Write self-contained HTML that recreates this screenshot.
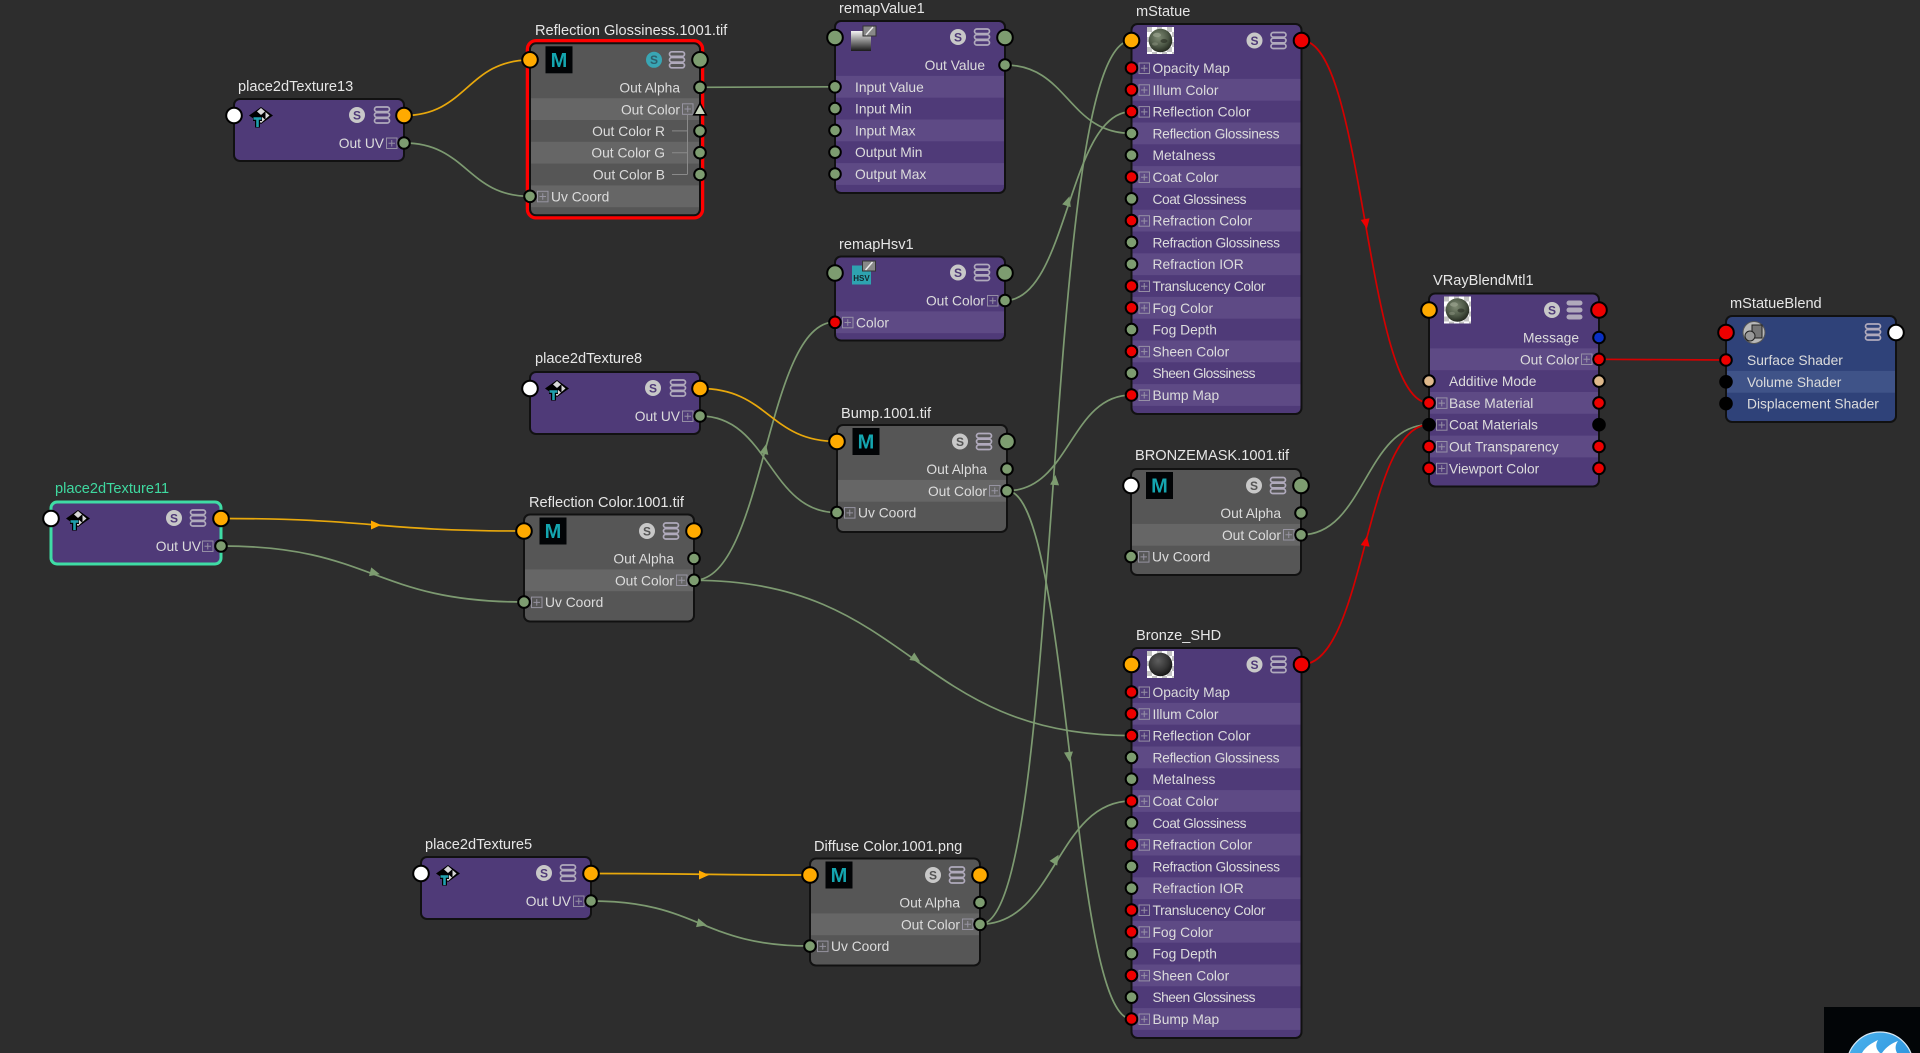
<!DOCTYPE html>
<html><head><meta charset="utf-8"><title>Node graph</title>
<style>
html,body{margin:0;padding:0;background:#2d2d2d;width:1920px;height:1053px;overflow:hidden}
svg{display:block;position:absolute;left:0;top:0}
text{font-family:"Liberation Sans",sans-serif;font-size:13.8px;fill:#dcdcdc}
.e{text-anchor:end}
.ti{font-size:14.6px;fill:#e6e6e6}
.s{font-size:12px;font-weight:bold;fill:#4f3a78;text-anchor:middle}
.m{font-size:20px;font-weight:bold;fill:#14a6b0;text-anchor:middle}
.wg,.wo,.wr{fill:none;stroke-width:1.7}
.wg{stroke:#7d9a71}.wo{stroke:#e8a80c}.wr{stroke:#d40000}
circle.r,circle.g,circle.o,circle.w,circle.t,circle.k,circle.b{stroke:#000;stroke-width:2}
.r{fill:#ee0000}.g{fill:#7d9c70}.o{fill:#ffaa00}.w{fill:#fff}.t{fill:#dfb98c}.k{fill:#000}.b{fill:#0a30c4}
.pu{fill:#4f3a78;stroke:#111;stroke-width:2}.gr{fill:#565656;stroke:#111;stroke-width:2}.bl{fill:#2f4279;stroke:#111;stroke-width:2}
.lp{fill:#5e4a85}.lg{fill:#666}.lb{fill:#3f5388}
</style></head><body>
<svg width="1920" height="1053" viewBox="0 0 1920 1053" xmlns="http://www.w3.org/2000/svg">
<defs>
<g id="pb"><rect x=".5" y=".5" width="10.5" height="10.5" fill="none" stroke="#a09cab" stroke-opacity=".85"/><path d="M5.75 2.5v6.5M2.5 5.75h6.5" stroke="#a09cab" stroke-opacity=".85" fill="none"/></g>
<g id="mn" fill="none" stroke="#b0aabc" stroke-width="1.7"><rect x="-7.5" y="-8" width="15" height="4.6" rx="2.3"/><rect x="-7.5" y="-2.3" width="15" height="4.6" rx="2.3"/><rect x="-7.5" y="3.4" width="15" height="4.6" rx="2.3"/></g>
<g id="tx"><polygon points="11,-8.5 23,0 11,8.5 -1,0" fill="#000"/><polygon points="11,-7.5 15,-4 11,-.5 7,-4" fill="#d8d8d8"/><polygon points="11,.5 15,4 11,7.5 7,4" fill="#d8d8d8"/><polygon points="15.5,-3.5 19.5,0 15.5,3.5" fill="#d8d8d8"/><path d="M3 3h9M7.5 3v9" stroke="#000" stroke-width="5" fill="none"/><path d="M3.5 3h8M7.5 3v8.5" stroke="#1fa0ad" stroke-width="2.6" fill="none"/></g>
<pattern id="ck" width="10" height="10" patternUnits="userSpaceOnUse"><rect width="10" height="10" fill="#fff"/><rect width="5" height="5" fill="#c4c4c4"/><rect x="5" y="5" width="5" height="5" fill="#c4c4c4"/></pattern>
<radialGradient id="sp1" cx=".42" cy=".36" r=".7"><stop offset="0" stop-color="#7f8a74"/><stop offset=".55" stop-color="#4f5a48"/><stop offset="1" stop-color="#1c2018"/></radialGradient>
<radialGradient id="sp2" cx=".4" cy=".34" r=".72"><stop offset="0" stop-color="#5e5e5e"/><stop offset=".6" stop-color="#343434"/><stop offset="1" stop-color="#101010"/></radialGradient>
<linearGradient id="vg" x1="0" y1="0" x2="0" y2="1"><stop offset="0" stop-color="#f4f4f4"/><stop offset="1" stop-color="#1a1a1a"/></linearGradient>
<linearGradient id="lg" x1="0" y1="0" x2="1" y2="1"><stop offset="0" stop-color="#4db4ee"/><stop offset="1" stop-color="#1f86d6"/></linearGradient>
<g id="sw1"><rect width="27" height="27" fill="url(#ck)"/><circle cx="13.5" cy="13.5" r="11.8" fill="url(#sp1)"/><ellipse cx="10" cy="8" rx="4" ry="2.2" fill="#9aa28e" opacity=".7"/><ellipse cx="17" cy="14" rx="3.5" ry="2" fill="#2d3328" opacity=".7"/><ellipse cx="8" cy="17" rx="3" ry="1.6" fill="#8d9682" opacity=".5"/></g>
<g id="sw2"><rect width="27" height="27" fill="url(#ck)"/><circle cx="13.5" cy="13.5" r="11.8" fill="url(#sp2)"/></g>
<g id="mi"><rect width="27" height="27" fill="#020406"/></g>
</defs>

<rect width="1920" height="1053" fill="#2d2d2d"/>

<!-- wires -->
<path class="wo" d="M404,115.5C467,115.5 467,60 530,60"/>
<path class="wg" d="M404,143C467,143 467,196.3 530,196.3"/>
<path class="wg" d="M700,87.3L835,86.8"/>
<path class="wg" d="M1005,65C1068,65 1068,133.4 1131.5,133.4"/>
<path class="wg" d="M1005,300.5C1068,300.5 1068,111.6 1131.5,111.6"/>
<path class="wg" d="M980,924.3C1065,924.3 1040,40.5 1131.5,40.5"/>
<path class="wg" d="M980,924.3C1056,924.3 1056,801 1131.5,801"/>
<path class="wg" d="M694,580.3C765,580 765,322 835,322"/>
<path class="wg" d="M694,580.3C912,580.3 912,735.6 1131.5,735.6"/>
<path class="wo" d="M700,388.5C769,388.5 769,441.5 837,441.5"/>
<path class="wg" d="M700,416C769,416 769,512.6 837,512.6"/>
<path class="wg" d="M1007,490.8C1070,490.8 1070,395 1131.5,395"/>
<path class="wg" d="M1007,490.8C1070,490.8 1070,1019 1131.5,1019"/>
<path class="wg" d="M1301,534.8C1365,534.8 1365,424.7 1429,424.7"/>
<path class="wr" d="M1301.5,664.5C1365,664.5 1365,424.7 1429,424.7"/>
<path class="wr" d="M1301.5,40.5C1365,40.5 1365,402.9 1429,402.9"/>
<path class="wr" d="M1599,359.3L1726,360"/>
<path class="wo" d="M222,518.5C373,518.5 373,531 524,531"/>
<path class="wg" d="M222,546C373,546 373,602 524,602"/>
<path class="wo" d="M591,873.5C700,873.5 700,875 810,875"/>
<path class="wg" d="M591,901C700,901 700,946 810,946"/>

<!-- arrows -->
<g>
<polygon class="o" transform="translate(376,525)" points="-5,-4.5 5,0 -5,4.5"/>
<polygon class="g" transform="translate(375,573) rotate(14)" points="-5,-4.5 5,0 -5,4.5"/>
<polygon class="o" transform="translate(704,875)" points="-5,-4.5 5,0 -5,4.5"/>
<polygon class="g" transform="translate(702,924) rotate(14)" points="-5,-4.5 5,0 -5,4.5"/>
<polygon class="g" transform="translate(916,659) rotate(33)" points="-5,-4.5 5,0 -5,4.5"/>
<polygon class="g" transform="translate(765,449) rotate(-78)" points="-5,-4.5 5,0 -5,4.5"/>
<polygon class="g" transform="translate(1068,201) rotate(-72)" points="-5,-4.5 5,0 -5,4.5"/>
<polygon class="g" transform="translate(1069,757) rotate(84)" points="-5,-4.5 5,0 -5,4.5"/>
<polygon class="g" transform="translate(1056,859) rotate(-58)" points="-5,-4.5 5,0 -5,4.5"/>
<polygon class="g" transform="translate(1055,480) rotate(-85)" points="-5,-4.5 5,0 -5,4.5"/>
<polygon class="r" transform="translate(1366,224) rotate(80)" points="-5,-4.5 5,0 -5,4.5"/>
<polygon class="r" transform="translate(1366,541) rotate(-80)" points="-5,-4.5 5,0 -5,4.5"/>
</g>

<!-- place2dTexture13 -->
<text class="ti" x="238" y="91">place2dTexture13</text>
<g transform="translate(234,99)">
<rect class="pu" width="170" height="62" rx="6"/>
<use href="#tx" x="16" y="16.5"/>
<circle cx="123" cy="16" r="8" fill="#c8c8c8"/><text class="s" x="123" y="20.3">S</text>
<use href="#mn" x="148" y="16"/>
<text class="e" x="150" y="49">Out UV</text><use href="#pb" x="152" y="38.5"/>
<circle class="w" cx="0" cy="16.5" r="7.8"/><circle class="o" cx="170" cy="16.5" r="7.8"/><circle class="g" cx="170" cy="44" r="5.8"/>
</g>

<!-- Reflection Glossiness -->
<text class="ti" x="535" y="35">Reflection Glossiness.1001.tif</text>
<g transform="translate(530,43.3)">
<rect x="-2" y="-2" width="174" height="176" rx="8" fill="none" stroke="#f00" stroke-width="4.5"/>
<rect class="gr" width="170" height="172" rx="6"/>
<rect class="lg" x="1" y="54.9" width="168" height="21.8"/><rect class="lg" x="1" y="98.5" width="168" height="21.8"/><rect class="lg" x="1" y="142.1" width="168" height="21.8"/>
<use href="#mi" x="15.5" y="3"/><text class="m" x="29" y="23.5">M</text>
<circle cx="124" cy="16.5" r="8" fill="#39a6b4"/><text class="s" x="124" y="20.8" style="fill:#2d5f6c">S</text>
<use href="#mn" x="147" y="16.5"/>
<text class="e" x="150" y="49">Out Alpha</text>
<text class="e" x="150" y="71">Out Color</text><use href="#pb" x="152" y="60"/>
<text class="e" x="135" y="92.6">Out Color R</text>
<text class="e" x="135" y="114.4">Out Color G</text>
<text class="e" x="135" y="136.2">Out Color B</text>
<path d="M157.5,71V131M142,87.6H157.5M142,109.4H157.5M142,131.2H157.5" stroke="#8a8a8a" fill="none"/>
<use href="#pb" x="7" y="147.5"/><text x="21" y="158">Uv Coord</text>
<circle class="o" cx="0" cy="16.5" r="7.8"/><circle class="g" cx="170" cy="16.5" r="7.8"/>
<circle class="g" cx="170" cy="44" r="5.8"/><polygon points="170,60 176.2,71.5 163.8,71.5" fill="#c7d4bc" stroke="#000" stroke-width="1.6"/>
<circle class="g" cx="170" cy="87.6" r="5.8"/><circle class="g" cx="170" cy="109.4" r="5.8"/><circle class="g" cx="170" cy="131.2" r="5.8"/>
<circle class="g" cx="0" cy="153" r="5.8"/>
</g>

<!-- remapValue1 -->
<text class="ti" x="839" y="13">remapValue1</text>
<g transform="translate(835,21)">
<rect class="pu" width="170" height="172" rx="6"/>
<rect class="lp" x="1" y="54.9" width="168" height="21.8"/><rect class="lp" x="1" y="98.5" width="168" height="21.8"/><rect class="lp" x="1" y="142.1" width="168" height="21.8"/>
<rect x="16" y="10" width="20" height="20" fill="url(#vg)"/><rect x="28" y="5" width="13" height="10" fill="#888" stroke="#333"/><path d="M31,14L38,6" stroke="#eee" stroke-width="1.4"/>
<circle cx="123" cy="16" r="8" fill="#c8c8c8"/><text class="s" x="123" y="20.3">S</text>
<use href="#mn" x="147" y="16"/>
<text class="e" x="150" y="49">Out Value</text>
<text x="20" y="71">Input Value</text>
<text x="20" y="92.6">Input Min</text>
<text x="20" y="114.4">Input Max</text>
<text x="20" y="136.2">Output Min</text>
<text x="20" y="158">Output Max</text>
<circle class="g" cx="0" cy="16.5" r="7.8"/><circle class="g" cx="170" cy="16.5" r="7.8"/>
<circle class="g" cx="170" cy="44" r="5.8"/>
<circle class="g" cx="0" cy="65.8" r="5.8"/><circle class="g" cx="0" cy="87.6" r="5.8"/><circle class="g" cx="0" cy="109.4" r="5.8"/><circle class="g" cx="0" cy="131.2" r="5.8"/><circle class="g" cx="0" cy="153" r="5.8"/>
</g>

<!-- mStatue -->
<text class="ti" x="1136" y="16">mStatue</text>
<g transform="translate(1131.5,24)">
<rect class="pu" width="170" height="390" rx="6"/>
<rect class="lp" x="1" y="54.9" width="168" height="21.8"/><rect class="lp" x="1" y="98.5" width="168" height="21.8"/><rect class="lp" x="1" y="142.1" width="168" height="21.8"/><rect class="lp" x="1" y="185.7" width="168" height="21.8"/><rect class="lp" x="1" y="229.3" width="168" height="21.8"/><rect class="lp" x="1" y="272.9" width="168" height="21.8"/><rect class="lp" x="1" y="316.5" width="168" height="21.8"/><rect class="lp" x="1" y="360.1" width="168" height="21.8"/>
<use href="#sw1" x="15.5" y="3"/>
<circle cx="123" cy="16.5" r="8" fill="#c8c8c8"/><text class="s" x="123" y="20.8">S</text>
<use href="#mn" x="147" y="16.5"/>
<use href="#pb" x="7" y="38.5"/><text x="21" y="49">Opacity Map</text>
<use href="#pb" x="7" y="60.3"/><text x="21" y="71">Illum Color</text>
<use href="#pb" x="7" y="82.1"/><text x="21" y="92.6">Reflection Color</text>
<text x="21" y="114.4" textLength="127">Reflection Glossiness</text>
<text x="21" y="136.2">Metalness</text>
<use href="#pb" x="7" y="147.5"/><text x="21" y="158">Coat Color</text>
<text x="21" y="179.8" textLength="94">Coat Glossiness</text>
<use href="#pb" x="7" y="191.2"/><text x="21" y="201.6">Refraction Color</text>
<text x="21" y="223.4" textLength="127.5">Refraction Glossiness</text>
<text x="21" y="245.2">Refraction IOR</text>
<use href="#pb" x="7" y="256.5"/><text x="21" y="267" textLength="113">Translucency Color</text>
<use href="#pb" x="7" y="278.3"/><text x="21" y="288.8">Fog Color</text>
<text x="21" y="310.6">Fog Depth</text>
<use href="#pb" x="7" y="321.9"/><text x="21" y="332.4">Sheen Color</text>
<text x="21" y="354.2" textLength="103">Sheen Glossiness</text>
<use href="#pb" x="7" y="365.5"/><text x="21" y="376">Bump Map</text>
<circle class="o" cx="0" cy="16.5" r="7.8"/><circle class="r" cx="170" cy="16.5" r="7.8"/>
<circle class="r" cx="0" cy="44" r="5.8"/><circle class="r" cx="0" cy="65.8" r="5.8"/><circle class="r" cx="0" cy="87.6" r="5.8"/><circle class="g" cx="0" cy="109.4" r="5.8"/><circle class="g" cx="0" cy="131.2" r="5.8"/><circle class="r" cx="0" cy="153" r="5.8"/><circle class="g" cx="0" cy="174.8" r="5.8"/><circle class="r" cx="0" cy="196.6" r="5.8"/><circle class="g" cx="0" cy="218.4" r="5.8"/><circle class="g" cx="0" cy="240.2" r="5.8"/><circle class="r" cx="0" cy="262" r="5.8"/><circle class="r" cx="0" cy="283.8" r="5.8"/><circle class="g" cx="0" cy="305.6" r="5.8"/><circle class="r" cx="0" cy="327.4" r="5.8"/><circle class="g" cx="0" cy="349.2" r="5.8"/><circle class="r" cx="0" cy="371" r="5.8"/>
</g>

<!-- remapHsv1 -->
<text class="ti" x="839" y="249">remapHsv1</text>
<g transform="translate(835,256.5)">
<rect class="pu" width="170" height="84" rx="6"/>
<rect class="lp" x="1" y="54.9" width="168" height="21.8"/>
<rect x="17" y="9" width="19" height="19" fill="#2ea3b0"/><text x="26.5" y="24.5" style="font-size:8px;font-weight:bold;fill:#13262c;text-anchor:middle">HSV</text>
<rect x="27.5" y="4.5" width="13" height="10" fill="#888" stroke="#333"/><path d="M30.5,13.5L37.5,5.5" stroke="#eee" stroke-width="1.4"/>
<circle cx="123" cy="16" r="8" fill="#c8c8c8"/><text class="s" x="123" y="20.3">S</text>
<use href="#mn" x="147" y="16"/>
<text class="e" x="150" y="49">Out Color</text><use href="#pb" x="152" y="38.5"/>
<use href="#pb" x="7" y="60.3"/><text x="21" y="71">Color</text>
<circle class="g" cx="0" cy="16.5" r="7.8"/><circle class="g" cx="170" cy="16.5" r="7.8"/><circle class="g" cx="170" cy="44" r="5.8"/><circle class="r" cx="0" cy="65.8" r="5.8"/>
</g>

<!-- place2dTexture8 -->
<text class="ti" x="535" y="363">place2dTexture8</text>
<g transform="translate(530,372)">
<rect class="pu" width="170" height="62" rx="6"/>
<use href="#tx" x="16" y="16.5"/>
<circle cx="123" cy="16" r="8" fill="#c8c8c8"/><text class="s" x="123" y="20.3">S</text>
<use href="#mn" x="148" y="16"/>
<text class="e" x="150" y="49">Out UV</text><use href="#pb" x="152" y="38.5"/>
<circle class="w" cx="0" cy="16.5" r="7.8"/><circle class="o" cx="170" cy="16.5" r="7.8"/><circle class="g" cx="170" cy="44" r="5.8"/>
</g>

<!-- Bump -->
<text class="ti" x="841" y="418">Bump.1001.tif</text>
<g transform="translate(837,425)">
<rect class="gr" width="170" height="107" rx="6"/>
<rect class="lg" x="1" y="54.9" width="168" height="21.8"/>
<use href="#mi" x="15.5" y="3"/><text class="m" x="29" y="23.5">M</text>
<circle cx="123" cy="16.5" r="8" fill="#c8c8c8"/><text class="s" x="123" y="20.8" style="fill:#555">S</text>
<use href="#mn" x="147" y="16.5"/>
<text class="e" x="150" y="49">Out Alpha</text>
<text class="e" x="150" y="71">Out Color</text><use href="#pb" x="152" y="60"/>
<use href="#pb" x="7" y="82.1"/><text x="21" y="92.6">Uv Coord</text>
<circle class="o" cx="0" cy="16.5" r="7.8"/><circle class="g" cx="170" cy="16.5" r="7.8"/><circle class="g" cx="170" cy="44" r="5.8"/><circle class="g" cx="170" cy="65.8" r="5.8"/><circle class="g" cx="0" cy="87.6" r="5.8"/>
</g>

<!-- BRONZEMASK -->
<text class="ti" x="1135" y="460">BRONZEMASK.1001.tif</text>
<g transform="translate(1131,469)">
<rect class="gr" width="170" height="106" rx="6"/>
<rect class="lg" x="1" y="54.9" width="168" height="21.8"/>
<use href="#mi" x="15" y="3"/><text class="m" x="28.5" y="23.5">M</text>
<circle cx="123" cy="16.5" r="8" fill="#c8c8c8"/><text class="s" x="123" y="20.8" style="fill:#555">S</text>
<use href="#mn" x="147" y="16.5"/>
<text class="e" x="150" y="49">Out Alpha</text>
<text class="e" x="150" y="71">Out Color</text><use href="#pb" x="152" y="60"/>
<use href="#pb" x="7" y="82.1"/><text x="21" y="92.6">Uv Coord</text>
<circle class="w" cx="0" cy="16.5" r="7.8"/><circle class="g" cx="170" cy="16.5" r="7.8"/><circle class="g" cx="170" cy="44" r="5.8"/><circle class="g" cx="170" cy="65.8" r="5.8"/><circle class="g" cx="0" cy="87.6" r="5.8"/>
</g>

<!-- VRayBlendMtl1 -->
<text class="ti" x="1433" y="285">VRayBlendMtl1</text>
<g transform="translate(1429,293.5)">
<rect class="pu" width="170" height="193" rx="6"/>
<rect class="lp" x="1" y="54.9" width="168" height="21.8"/><rect class="lp" x="1" y="98.5" width="168" height="21.8"/><rect class="lp" x="1" y="142.1" width="168" height="21.8"/>
<use href="#sw1" x="15" y="3"/>
<circle cx="123" cy="16.5" r="8" fill="#c8c8c8"/><text class="s" x="123" y="20.8">S</text>
<g fill="#b0aabc"><rect x="137.5" y="7" width="16" height="5" rx="2.5"/><rect x="137.5" y="14" width="16" height="5" rx="2.5"/><rect x="137.5" y="21" width="16" height="5" rx="2.5"/></g>
<text class="e" x="150" y="49">Message</text>
<text class="e" x="150" y="71">Out Color</text><use href="#pb" x="152" y="60"/>
<text x="20" y="92.6">Additive Mode</text>
<use href="#pb" x="7" y="103.9"/><text x="20" y="114.4">Base Material</text>
<use href="#pb" x="7" y="125.7"/><text x="20" y="136.2">Coat Materials</text>
<use href="#pb" x="7" y="147.5"/><text x="20" y="158">Out Transparency</text>
<use href="#pb" x="7" y="169.3"/><text x="20" y="179.8">Viewport Color</text>
<circle class="o" cx="0" cy="16.5" r="7.8"/><circle class="r" cx="170" cy="16.5" r="7.8"/>
<circle class="b" cx="170" cy="44" r="5.8"/><circle class="r" cx="170" cy="65.8" r="5.8"/>
<circle class="t" cx="0" cy="87.6" r="5.8"/><circle class="t" cx="170" cy="87.6" r="5.8"/>
<circle class="r" cx="0" cy="109.4" r="5.8"/><circle class="r" cx="170" cy="109.4" r="5.8"/>
<circle class="k" cx="0" cy="131.2" r="5.8"/><circle class="k" cx="170" cy="131.2" r="5.8"/>
<circle class="r" cx="0" cy="153" r="5.8"/><circle class="r" cx="170" cy="153" r="5.8"/>
<circle class="r" cx="0" cy="174.8" r="5.8"/><circle class="r" cx="170" cy="174.8" r="5.8"/>
</g>

<!-- mStatueBlend -->
<text class="ti" x="1730" y="308">mStatueBlend</text>
<g transform="translate(1726,316)">
<rect class="bl" width="170" height="106" rx="6"/>
<rect class="lb" x="1" y="54.9" width="168" height="21.8"/>
<circle cx="28" cy="16.5" r="11" fill="#b8b8b8" stroke="#555"/><rect x="26" y="9" width="10" height="13" fill="#777" stroke="#222"/><circle cx="24" cy="20" r="5" fill="#999" stroke="#222"/>
<use href="#mn" x="147" y="16"/>
<text x="21" y="49">Surface Shader</text>
<text x="21" y="71">Volume Shader</text>
<text x="21" y="92.6">Displacement Shader</text>
<circle class="r" cx="0" cy="16.5" r="7.8"/><circle class="w" cx="170" cy="16.5" r="7.8"/>
<circle class="r" cx="0" cy="44" r="5.8"/><circle class="k" cx="0" cy="65.8" r="5.8"/><circle class="k" cx="0" cy="87.6" r="5.8"/>
</g>

<!-- place2dTexture11 -->
<text class="ti" x="55" y="493" style="fill:#3fd9a0">place2dTexture11</text>
<g transform="translate(51,502)">
<rect width="170" height="62" rx="6" fill="#4f3a78" stroke="#3fdca5" stroke-width="3"/>
<use href="#tx" x="16" y="16.5"/>
<circle cx="123" cy="16" r="8" fill="#c8c8c8"/><text class="s" x="123" y="20.3">S</text>
<use href="#mn" x="147" y="16"/>
<text class="e" x="150" y="49">Out UV</text><use href="#pb" x="151" y="38.5"/>
<circle class="w" cx="0" cy="16.5" r="7.8"/><circle class="o" cx="170" cy="16.5" r="7.8"/><circle class="g" cx="170" cy="44" r="5.8"/>
</g>

<!-- Reflection Color -->
<text class="ti" x="529" y="507">Reflection Color.1001.tif</text>
<g transform="translate(524,514.5)">
<rect class="gr" width="170" height="107" rx="6"/>
<rect class="lg" x="1" y="54.9" width="168" height="21.8"/>
<use href="#mi" x="15.5" y="3"/><text class="m" x="29" y="23.5">M</text>
<circle cx="123" cy="16.5" r="8" fill="#c8c8c8"/><text class="s" x="123" y="20.8" style="fill:#555">S</text>
<use href="#mn" x="147" y="16.5"/>
<text class="e" x="150" y="49">Out Alpha</text>
<text class="e" x="150" y="71">Out Color</text><use href="#pb" x="152" y="60"/>
<use href="#pb" x="7" y="82.1"/><text x="21" y="92.6">Uv Coord</text>
<circle class="o" cx="0" cy="16.5" r="7.8"/><circle class="o" cx="170" cy="16.5" r="7.8"/><circle class="g" cx="170" cy="44" r="5.8"/><circle class="g" cx="170" cy="65.8" r="5.8"/><circle class="g" cx="0" cy="87.6" r="5.8"/>
</g>

<!-- Bronze_SHD -->
<text class="ti" x="1136" y="640">Bronze_SHD</text>
<g transform="translate(1131.5,648)">
<rect class="pu" width="170" height="390" rx="6"/>
<rect class="lp" x="1" y="54.9" width="168" height="21.8"/><rect class="lp" x="1" y="98.5" width="168" height="21.8"/><rect class="lp" x="1" y="142.1" width="168" height="21.8"/><rect class="lp" x="1" y="185.7" width="168" height="21.8"/><rect class="lp" x="1" y="229.3" width="168" height="21.8"/><rect class="lp" x="1" y="272.9" width="168" height="21.8"/><rect class="lp" x="1" y="316.5" width="168" height="21.8"/><rect class="lp" x="1" y="360.1" width="168" height="21.8"/>
<use href="#sw2" x="15.5" y="3"/>
<circle cx="123" cy="16.5" r="8" fill="#c8c8c8"/><text class="s" x="123" y="20.8">S</text>
<use href="#mn" x="147" y="16.5"/>
<use href="#pb" x="7" y="38.5"/><text x="21" y="49">Opacity Map</text>
<use href="#pb" x="7" y="60.3"/><text x="21" y="71">Illum Color</text>
<use href="#pb" x="7" y="82.1"/><text x="21" y="92.6">Reflection Color</text>
<text x="21" y="114.4" textLength="127">Reflection Glossiness</text>
<text x="21" y="136.2">Metalness</text>
<use href="#pb" x="7" y="147.5"/><text x="21" y="158">Coat Color</text>
<text x="21" y="179.8" textLength="94">Coat Glossiness</text>
<use href="#pb" x="7" y="191.2"/><text x="21" y="201.6">Refraction Color</text>
<text x="21" y="223.4" textLength="127.5">Refraction Glossiness</text>
<text x="21" y="245.2">Refraction IOR</text>
<use href="#pb" x="7" y="256.5"/><text x="21" y="267" textLength="113">Translucency Color</text>
<use href="#pb" x="7" y="278.3"/><text x="21" y="288.8">Fog Color</text>
<text x="21" y="310.6">Fog Depth</text>
<use href="#pb" x="7" y="321.9"/><text x="21" y="332.4">Sheen Color</text>
<text x="21" y="354.2" textLength="103">Sheen Glossiness</text>
<use href="#pb" x="7" y="365.5"/><text x="21" y="376">Bump Map</text>
<circle class="o" cx="0" cy="16.5" r="7.8"/><circle class="r" cx="170" cy="16.5" r="7.8"/>
<circle class="r" cx="0" cy="44" r="5.8"/><circle class="r" cx="0" cy="65.8" r="5.8"/><circle class="r" cx="0" cy="87.6" r="5.8"/><circle class="g" cx="0" cy="109.4" r="5.8"/><circle class="g" cx="0" cy="131.2" r="5.8"/><circle class="r" cx="0" cy="153" r="5.8"/><circle class="g" cx="0" cy="174.8" r="5.8"/><circle class="r" cx="0" cy="196.6" r="5.8"/><circle class="g" cx="0" cy="218.4" r="5.8"/><circle class="g" cx="0" cy="240.2" r="5.8"/><circle class="r" cx="0" cy="262" r="5.8"/><circle class="r" cx="0" cy="283.8" r="5.8"/><circle class="g" cx="0" cy="305.6" r="5.8"/><circle class="r" cx="0" cy="327.4" r="5.8"/><circle class="g" cx="0" cy="349.2" r="5.8"/><circle class="r" cx="0" cy="371" r="5.8"/>
</g>

<!-- place2dTexture5 -->
<text class="ti" x="425" y="849">place2dTexture5</text>
<g transform="translate(421,857)">
<rect class="pu" width="170" height="62" rx="6"/>
<use href="#tx" x="16" y="16.5"/>
<circle cx="123" cy="16" r="8" fill="#c8c8c8"/><text class="s" x="123" y="20.3">S</text>
<use href="#mn" x="147" y="16"/>
<text class="e" x="150" y="49">Out UV</text><use href="#pb" x="152" y="38.5"/>
<circle class="w" cx="0" cy="16.5" r="7.8"/><circle class="o" cx="170" cy="16.5" r="7.8"/><circle class="g" cx="170" cy="44" r="5.8"/>
</g>

<!-- Diffuse Color -->
<text class="ti" x="814" y="851">Diffuse Color.1001.png</text>
<g transform="translate(810,858.5)">
<rect class="gr" width="170" height="107" rx="6"/>
<rect class="lg" x="1" y="54.9" width="168" height="21.8"/>
<use href="#mi" x="15.5" y="3"/><text class="m" x="29" y="23.5">M</text>
<circle cx="123" cy="16.5" r="8" fill="#c8c8c8"/><text class="s" x="123" y="20.8" style="fill:#555">S</text>
<use href="#mn" x="147" y="16.5"/>
<text class="e" x="150" y="49">Out Alpha</text>
<text class="e" x="150" y="71">Out Color</text><use href="#pb" x="152" y="60"/>
<use href="#pb" x="7" y="82.1"/><text x="21" y="92.6">Uv Coord</text>
<circle class="o" cx="0" cy="16.5" r="7.8"/><circle class="o" cx="170" cy="16.5" r="7.8"/><circle class="g" cx="170" cy="44" r="5.8"/><circle class="g" cx="170" cy="65.8" r="5.8"/><circle class="g" cx="0" cy="87.6" r="5.8"/>
</g>

<!-- corner logo -->
<rect x="1824" y="1007" width="96" height="46" fill="#020507"/>
<circle cx="1880" cy="1065" r="33" fill="url(#lg)" stroke="#d8e8f4" stroke-width="1.2"/>
<path d="M1862,1053C1866,1046 1872,1043 1878,1040C1875,1045 1876,1049 1880,1053ZM1882,1053C1886,1047 1892,1043 1898,1041C1895,1045 1895,1049 1897,1053Z" fill="#fff"/>
</svg>
</body></html>
